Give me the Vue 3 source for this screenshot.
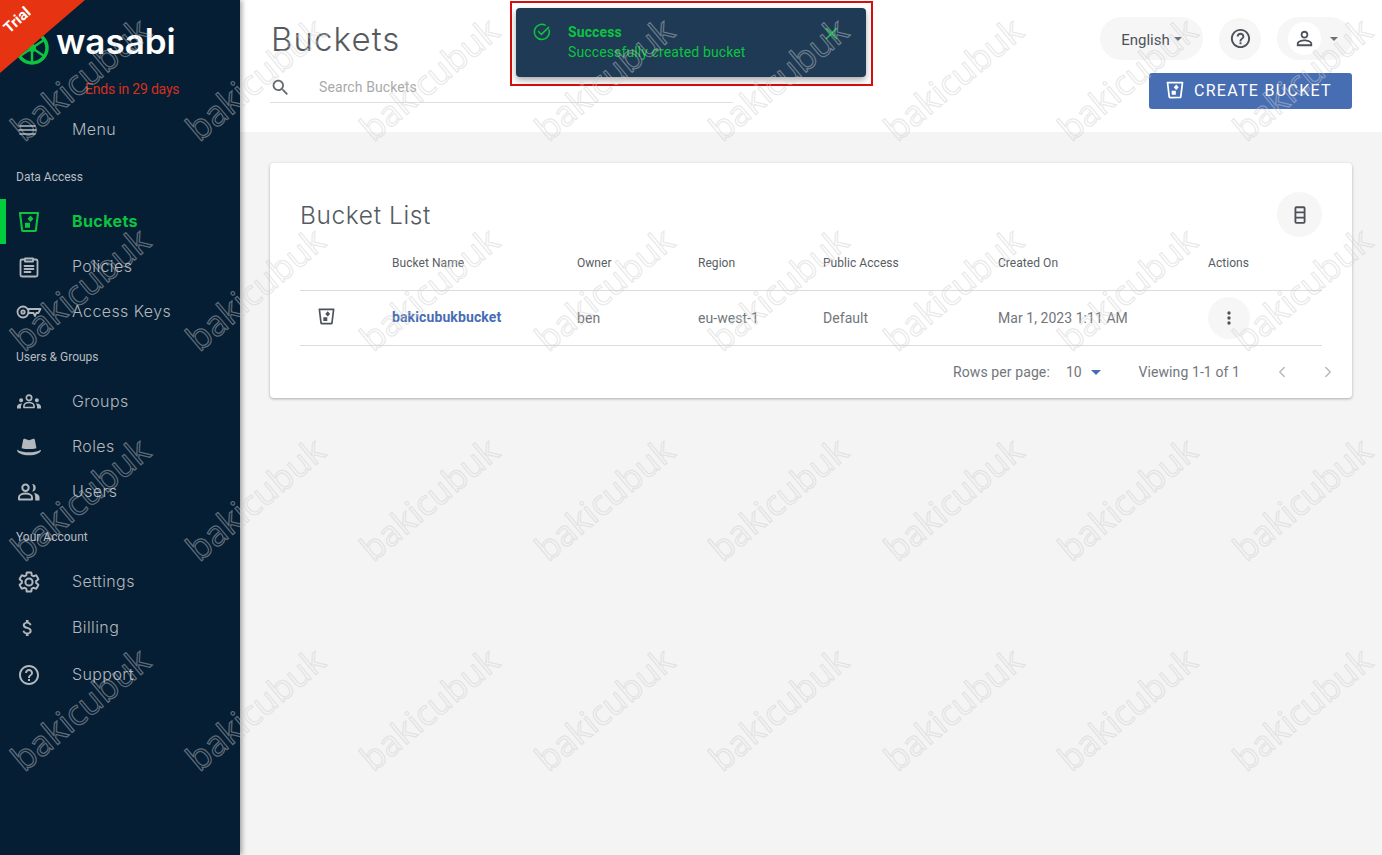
<script setup>
import { h } from 'vue'

const icons = {
  menu: { view: '0 0 24 24', s: ['M3 8h15M2 12h17M3 16h15'], w: 1.6 },
  bucket: {
    view: '0 0 24 24',
    s: ['M3 3h18l-2.100 17.200a1 1 0 0 1-1 .8H6.100a1 1 0 0 1-1-.8z'],
    f: ['M13.500 5.500l3 3.200-3 3.200-3-3.200zM8 12.800h5v5H8z'],
    w: 2.100
  },
  policy: {
    view: '0 0 24 24',
    s: ['M8 4.500H5a1.500 1.500 0 0 0-1.500 1.500v14A1.500 1.500 0 0 0 5 21.500h14a1.500 1.500 0 0 0 1.500-1.500V6A1.500 1.500 0 0 0 19 4.500h-3M8 3.500h8v3H8zM7.500 11h9M7.500 14h9M7.500 17h6'],
    w: 1.800
  },
  key: {
    view: '0 0 26 16',
    s: ['M12 5h12.500l-2.200 4h-2l-1.300 3-1.500-3H12M7 2.500a5.500 5.500 0 1 0 0 11 5.500 5.500 0 0 0 0-11zM7 6.300a1.700 1.700 0 1 0 0 3.400 1.700 1.700 0 0 0 0-3.400z'],
    w: 1.800
  },
  groups: {
    view: '0 0 26 18',
    s: ['M13 1.500a2.900 2.900 0 1 0 0 5.800 2.900 2.900 0 0 0 0-5.800zM7.500 15v-1.500c0-2.600 2.700-4 5.500-4s5.500 1.400 5.500 4V15z'],
    f: ['M4.500 5a2.200 2.200 0 1 1 0 4.400 2.200 2.200 0 0 1 0-4.400zM21.500 5a2.200 2.200 0 1 1 0 4.400 2.200 2.200 0 0 1 0-4.400zM0 16v-2c0-2 2-3.500 5.500-3.400-.8.900-1.200 2-1.200 3.400v2zM26 16v-2c0-2-2-3.500-5.500-3.400.8.900 1.200 2 1.200 3.400v2z'],
    w: 1.800
  },
  hat: {
    view: '1.500 1.500 21 21',
    f: ['M5.500 13 6.800 6c.2-1 1.200-1.400 2-1l3.200 1.200L15.200 5c.8-.4 1.800 0 2 1l1.300 7c-4 1-9 1-13 0zM1.500 14.500c3 1.700 7 2.200 10.500 2.200s7.500-.5 10.500-2.200c0 3.200-5 4.800-10.500 4.800s-10.500-1.600-10.500-4.800z']
  },
  users: {
    view: '0 0 24 24',
    s: ['M8.500 4.500a3.200 3.200 0 1 0 0 6.400 3.200 3.200 0 0 0 0-6.400zM2 19.500v-2.200c0-2.400 3.200-3.700 6.500-3.700s6.500 1.300 6.500 3.700v2.200z'],
    f: ['M15 4a3.700 3.700 0 0 1 0 7.400c.9-1 1.300-2.300 1.300-3.700S15.900 5 15 4zM17 13c3 .5 5.500 1.800 5.500 4.300v3.200h-4.300v-3.200c0-1.700-.5-3.100-1.200-4.300z'],
    w: 2
  },
  settings: {
    view: '0 0 24 24',
    s: ['M19.140 12.940c.04-.3.06-.61.06-.94 0-.32-.02-.64-.07-.94l2.030-1.580c.18-.14.23-.41.12-.61l-1.920-3.320c-.12-.22-.37-.29-.59-.22l-2.390.96c-.5-.38-1.030-.7-1.620-.94l-.36-2.540c-.04-.24-.24-.41-.48-.41h-3.840c-.24 0-.43.17-.47.41l-.36 2.540c-.59.24-1.130.57-1.620.94l-2.390-.96c-.22-.08-.47 0-.59.22L2.740 8.870c-.12.21-.08.47.12.61l2.030 1.580c-.05.3-.09.63-.09.94s.02.64.07.94l-2.030 1.580c-.18.14-.23.41-.12.61l1.920 3.320c.12.22.37.29.59.22l2.390-.96c.5.38 1.030.7 1.620.94l.36 2.540c.05.24.24.41.48.41h3.840c.24 0 .44-.17.47-.41l.36-2.540c.59-.24 1.130-.56 1.620-.94l2.390.96c.22.08.47 0 .59-.22l1.920-3.320c.12-.22.07-.47-.12-.61l-2.010-1.580zM12 15.600c-1.980 0-3.600-1.620-3.600-3.600s1.620-3.600 3.600-3.600 3.600 1.620 3.600 3.600-1.620 3.600-3.600 3.600z'],
    w: 2
  },
  dollar: {
    view: '0 -1.500 27 27',
    f: ['M11.800 10.900c-2.270-.59-3-1.200-3-2.150 0-1.090 1.010-1.850 2.700-1.850 1.780 0 2.440.85 2.500 2.100h2.210c-.07-1.720-1.120-3.300-3.210-3.810V3h-3v2.160c-1.940.42-3.500 1.680-3.500 3.610 0 2.310 1.910 3.460 4.700 4.130 2.500.6 3 1.480 3 2.410 0 .69-.49 1.790-2.700 1.790-2.060 0-2.870-.92-2.980-2.100h-2.200c.12 2.190 1.760 3.420 3.680 3.830V21h3v-2.150c1.950-.37 3.500-1.500 3.500-3.550 0-2.840-2.430-3.810-4.700-4.400z']
  },
  help: {
    view: '0 0 24 24',
    f: ['M11 18h2v-2h-2v2zm1-16C6.480 2 2 6.480 2 12s4.480 10 10 10 10-4.480 10-10S17.520 2 12 2zm0 18c-4.410 0-8-3.590-8-8s3.590-8 8-8 8 3.590 8 8-3.590 8-8 8zm0-14c-2.210 0-4 1.790-4 4h2c0-1.100.9-2 2-2s2 .9 2 2c0 2-3 1.750-3 5h2c0-2.250 3-2.500 3-5 0-2.210-1.790-4-4-4z']
  },
  person: {
    view: '0 0 24 24',
    f: ['M12 5.900c1.160 0 2.100.94 2.100 2.100s-.94 2.100-2.100 2.100S9.900 9.160 9.900 8s.94-2.100 2.100-2.100m0 9c2.970 0 6.100 1.460 6.100 2.100v1.100H5.900V17c0-.64 3.130-2.100 6.100-2.100M12 4C9.790 4 8 5.790 8 8s1.790 4 4 4 4-1.790 4-4-1.790-4-4-4zm0 9c-2.670 0-8 1.340-8 4v3h16v-3c0-2.660-5.330-4-8-4z']
  },
  search: {
    view: '0 0 24 24',
    f: ['M15.500 14h-.79l-.28-.27C15.410 12.590 16 11.110 16 9.500 16 5.910 13.090 3 9.500 3S3 5.910 3 9.500 5.910 16 9.500 16c1.610 0 3.090-.59 4.230-1.570l.27.28v.79l5 4.990L20.490 19l-4.990-5zm-6 0C7.010 14 5 11.990 5 9.500S7.010 5 9.500 5 14 7.010 14 9.500 11.990 14 9.500 14z']
  },
  check: {
    view: '0 0 24 24',
    s: ['M20.500 9.500A9 9 0 1 1 15.800 3.800M7.800 11.500l3.400 3.400L20 6.500'],
    w: 1.800
  },
  close: { view: '0 0 24 24', s: ['M4 4l16 16M20 4L4 20'], w: 2.600 },
  storage: {
    view: '0 0 24 24',
    s: ['M8 3.500h8a1 1 0 0 1 1 1v15a1 1 0 0 1-1 1H8a1 1 0 0 1-1-1v-15a1 1 0 0 1 1-1zM7 9.200h10M7 14.800h10'],
    w: 2
  },
  dots: {
    view: '0 0 24 24',
    f: ['M12 8a2 2 0 1 0 0-4 2 2 0 0 0 0 4zm0 2a2 2 0 1 0 0 4 2 2 0 0 0 0-4zm0 6a2 2 0 1 0 0 4 2 2 0 0 0 0-4z']
  },
  prev: { view: '0 0 24 24', s: ['M15 6l-6 6 6 6'], w: 1.800 },
  next: { view: '0 0 24 24', s: ['M9 6l6 6-6 6'], w: 1.800 }
}

// small functional component so the icon table above stays the only source of paths
const Icon = (props) => {
  const ic = icons[props.name]
  const strokes = (ic.s || []).map((d) =>
    h('path', { d, fill: 'none', stroke: 'currentColor', 'stroke-width': ic.w, 'stroke-linejoin': 'round', 'stroke-linecap': 'round' })
  )
  const fills = (ic.f || []).map((d) => h('path', { d, fill: 'currentColor' }))
  return h('svg', { viewBox: ic.view, width: props.size, height: props.size }, [...strokes, ...fills])
}
Icon.props = ['name', 'size']

const nav = [
  { label: 'Menu', icon: 'menu', toggle: true },
  { section: 'Data Access' },
  { label: 'Buckets', icon: 'bucket', active: true },
  { label: 'Policies', icon: 'policy' },
  { label: 'Access Keys', icon: 'key' },
  { section: 'Users & Groups' },
  { label: 'Groups', icon: 'groups' },
  { label: 'Roles', icon: 'hat' },
  { label: 'Users', icon: 'users' },
  { section: 'Your Account' },
  { label: 'Settings', icon: 'settings' },
  { label: 'Billing', icon: 'dollar', tall: true },
  { label: 'Support', icon: 'help', tall: true }
]

const watermarks = Array.from({ length: 32 }, (_, i) => i)
</script>

<template>
  <div class="page">
    <aside class="sidebar">
      <div class="ribbon"><span>Trial</span></div>
      <div class="logo">
        <svg class="logo-mark" viewBox="0 0 34 34" width="34" height="34">
          <circle cx="17" cy="17" r="15" fill="none" stroke="#0cc440" stroke-width="3.500" />
          <path d="M17 3v28M5 9l24 16M29 9L5 25" stroke="#0cc440" stroke-width="2.500" fill="none" />
          <circle cx="17" cy="17" r="4" fill="#0cc440" />
        </svg>
        <span class="logo-text">wasabi</span>
      </div>
      <div class="ends">Ends in 29 days</div>
      <nav class="nav">
        <template v-for="item in nav" :key="item.label || item.section">
          <div v-if="item.section" class="nav-section">{{ item.section }}</div>
          <div v-else class="nav-item" :class="{ active: item.active, tall: item.tall, toggle: item.toggle }">
            <span class="nav-icon"><Icon :name="item.icon" :size="item.icon === 'key' ? 26 : 24" /></span>
            <span class="nav-label">{{ item.label }}</span>
          </div>
        </template>
      </nav>
    </aside>

    <main class="main">
      <header class="header">
        <div class="header-left">
          <h1 class="title">Buckets</h1>
          <div class="search">
            <span class="search-icon"><Icon name="search" :size="21" /></span>
            <span class="search-text">Search Buckets</span>
          </div>
        </div>
        <div class="header-right">
          <div class="controls">
            <div class="pill lang"><span class="lang-text">English</span> <i class="caret"></i></div>
            <div class="round"><Icon name="help" :size="23" /></div>
            <div class="pill user">
              <span class="user-circle"><Icon name="person" :size="23" /></span>
              <i class="caret"></i>
            </div>
          </div>
          <button class="create-btn">
            <Icon name="bucket" :size="20" />
            <span>CREATE BUCKET</span>
          </button>
        </div>
      </header>

      <section class="content">
        <div class="card">
          <div class="card-head">
            <h2 class="card-title">Bucket List</h2>
            <div class="round storage"><Icon name="storage" :size="22" /></div>
          </div>
          <div class="row head-row">
            <span></span>
            <span>Bucket Name</span>
            <span>Owner</span>
            <span>Region</span>
            <span>Public Access</span>
            <span>Created On</span>
            <span>Actions</span>
          </div>
          <div class="row body-row">
            <span class="row-icon"><Icon name="bucket" :size="19" /></span>
            <a class="bucket-link">bakicubukbucket</a>
            <span>ben</span>
            <span>eu-west-1</span>
            <span>Default</span>
            <span>Mar 1, 2023 1:11 AM</span>
            <span class="action"><Icon name="dots" :size="20" /></span>
          </div>
          <div class="pager">
            <span>Rows per page:</span>
            <span class="per-page">10 <i class="caret blue"></i></span>
            <span class="viewing">Viewing 1-1 of 1</span>
            <span class="arrow"><Icon name="prev" :size="18" /></span>
            <span class="arrow"><Icon name="next" :size="18" /></span>
          </div>
        </div>
      </section>
    </main>

    <div class="toast-mark">
      <div class="toast">
        <span class="toast-icon"><Icon name="check" :size="20" /></span>
        <div class="toast-body">
          <strong>Success</strong>
          <span>Successfully created bucket</span>
        </div>
        <span class="toast-close"><Icon name="close" :size="15" /></span>
      </div>
    </div>

    <div class="watermarks">
      <span v-for="n in watermarks" :key="n" class="wm"><b>bakicubuk</b></span>
    </div>
  </div>
</template>

<style>
html,
body {
  margin: 0;
  background: #f4f4f4;
}
</style>

<style scoped>
* {
  box-sizing: border-box;
}

.page {
  position: relative;
  display: flex;
  width: 100%;
  height: 855px;
  overflow: hidden;
  font-family: Roboto, "Liberation Sans", sans-serif;
  color: #555b61;
}

.sidebar {
  position: relative;
  z-index: 2;
  flex: 0 0 240px;
  background: #051e34;
  box-shadow: 2px 0 5px rgba(0, 0, 0, 0.35);
}

.ribbon {
  position: absolute;
  top: 0;
  left: 0;
  z-index: 2;
  width: 85px;
  height: 73px;
  background: #e63312;
  clip-path: polygon(0 0, 100% 0, 0 100%);
}

.ribbon span {
  position: absolute;
  top: 11px;
  left: 2px;
  transform: rotate(-42deg);
  font-size: 15px;
  font-weight: 700;
  color: #fff;
}

.logo {
  display: flex;
  align-items: center;
  gap: 7px;
  height: 50px;
  padding: 32px 0 0 15px;
}

.logo-mark {
  flex: none;
  margin-top: 14px;
}

.logo-text {
  font-family: Inter, "Liberation Sans", sans-serif;
  font-size: 35px;
  font-weight: 600;
  line-height: 1;
  color: #fff;
}

.ends {
  margin-top: 30px;
  padding-left: 85px;
  height: 18px;
  font-size: 14px;
  line-height: 18px;
  letter-spacing: -0.2px;
  color: #d5301c;
}

.nav {
  margin-top: 11px;
}

.nav-item {
  position: relative;
  display: flex;
  align-items: center;
  height: 45px;
  padding-left: 16px;
  color: #b4b8bc;
}

.nav-item.toggle {
  margin-top: -2px;
  margin-bottom: 2px;
}

.nav-item.tall {
  height: 47px;
}

.nav-item.active {
  color: #0cc440;
}

.nav-item.active::before {
  content: '';
  position: absolute;
  left: 0;
  top: 0;
  bottom: 0;
  width: 6px;
  background: #00ce3e;
}

.nav-icon {
  display: flex;
  align-items: center;
  justify-content: center;
  width: 26px;
}

.nav-label {
  margin-left: 30px;
  margin-top: -2px;
  font-family: Inter, "Liberation Sans", sans-serif;
  font-size: 16px;
  font-weight: 300;
  letter-spacing: 0.4px;
}

.nav-item.active .nav-label {
  font-weight: 700;
}

.nav-section {
  display: flex;
  align-items: center;
  height: 45px;
  padding-left: 16px;
  font-size: 12px;
  color: #b9bcc0;
}

.main {
  flex: 1;
  min-width: 0;
  display: flex;
  flex-direction: column;
}

.header {
  display: flex;
  justify-content: space-between;
  height: 132px;
  padding: 0 30px;
  background: #fff;
}

.header-left {
  width: 463px;
}

.title {
  margin: 19px 0 0 1px;
  font-family: Inter, "Liberation Sans", sans-serif;
  font-size: 33px;
  font-weight: 300;
  line-height: 40px;
  letter-spacing: 1.1px;
  color: #555b61;
}

.search {
  display: flex;
  align-items: center;
  height: 44px;
  padding-top: 13px;
  border-bottom: 1px solid #dfdfdf;
}

.search-icon {
  display: flex;
  width: 49px;
  color: #64696e;
}

.search-text {
  font-size: 14px;
  letter-spacing: 0.1px;
  color: #a9a9a9;
}

.header-right {
  display: flex;
  flex-direction: column;
  align-items: flex-end;
  padding-top: 17px;
}

.controls {
  display: flex;
  align-items: center;
  gap: 16px;
}

.pill,
.round {
  display: flex;
  align-items: center;
  justify-content: center;
  background: #f6f6f6;
  color: #4c5258;
}

.pill {
  height: 43px;
  border-radius: 22px;
}

.lang {
  width: 103px;
  gap: 4px;
  font-size: 15px;
}

.lang-text {
  margin-top: 2px;
}

.round {
  width: 42px;
  height: 42px;
  border-radius: 50%;
}

.user {
  width: 75px;
  justify-content: flex-start;
  padding-left: 11px;
  gap: 9px;
}

.user-circle {
  display: flex;
  align-items: center;
  justify-content: center;
  width: 33px;
  height: 33px;
  border-radius: 50%;
  background: #fff;
}

.caret {
  display: inline-block;
  width: 0;
  height: 0;
  border-left: 4px solid transparent;
  border-right: 4px solid transparent;
  border-top: 4px solid #6d7278;
}

.caret.blue {
  border-left-width: 5px;
  border-right-width: 5px;
  border-top: 5px solid #476db3;
  margin: 0 0 2px 6px;
}

.create-btn {
  display: flex;
  align-items: center;
  gap: 9px;
  width: 203px;
  height: 36px;
  margin-top: 13px;
  padding: 0 0 2px 16px;
  border: none;
  border-radius: 3px;
  background: #476db3;
  color: #fff;
  font-family: Roboto, "Liberation Sans", sans-serif;
  font-size: 16px;
  font-weight: 400;
  letter-spacing: 1.3px;
}

.content {
  flex: 1;
  padding: 31px 30px 0;
  background: #f4f4f4;
}

.card {
  height: 235px;
  padding: 29px 30px 0;
  border-radius: 4px;
  background: #fff;
  box-shadow: 0 1px 3px rgba(0, 0, 0, 0.3);
}

.card-head {
  display: flex;
  align-items: flex-start;
  justify-content: space-between;
  height: 50px;
}

.card-title {
  margin: 8px 0 0;
  font-family: Inter, "Liberation Sans", sans-serif;
  font-size: 24.5px;
  font-weight: 300;
  line-height: 30px;
  letter-spacing: 0.6px;
  color: #555b61;
}

.storage {
  width: 45px;
  height: 45px;
}

.row {
  display: grid;
  grid-template-columns: 92px 185px 121px 125px 175px 210px 1fr;
  align-items: center;
}

.head-row {
  height: 49px;
  padding-bottom: 6px;
  font-size: 12px;
  letter-spacing: 0.05px;
  color: #575d63;
  border-bottom: 1px solid #dcdcdc;
}

.body-row {
  height: 55px;
  font-size: 14px;
  letter-spacing: 0.05px;
  color: #72767b;
  border-bottom: 1px solid #dcdcdc;
}

.row-icon {
  display: flex;
  padding-left: 17px;
  margin-top: -3px;
  color: #4c5258;
}

.bucket-link {
  margin-top: -2px;
  font-weight: 700;
  letter-spacing: 0.12px;
  color: #476db3;
}

.action {
  display: flex;
  align-items: center;
  justify-content: center;
  width: 42px;
  height: 42px;
  border-radius: 50%;
  background: #f6f6f6;
  color: #4c5258;
}

.pager {
  display: flex;
  align-items: center;
  justify-content: flex-end;
  height: 52px;
  margin-right: -29px;
  font-size: 14px;
  letter-spacing: 0.1px;
  color: #72767b;
}

.per-page {
  margin-left: 16px;
}

.viewing {
  margin-left: 37px;
  margin-right: 19px;
}

.arrow {
  display: flex;
  width: 46px;
  justify-content: center;
  color: #b3b6b9;
}

.toast-mark {
  position: absolute;
  top: 1px;
  left: 510px;
  z-index: 3;
  width: 363px;
  height: 85px;
  padding: 5px 0 0 4px;
  border: 2px solid #d60e0e;
}

.toast {
  display: flex;
  width: 350px;
  height: 69px;
  padding: 15px 0 0 16px;
  border-radius: 4px;
  background: #1e3a54;
  box-shadow: 0 3px 6px rgba(0, 0, 0, 0.35);
  color: #0cc440;
  font-size: 14px;
}

.toast-icon {
  display: flex;
  align-items: flex-start;
  margin-top: -1px;
}

.toast-body {
  display: flex;
  flex-direction: column;
  gap: 2px;
  width: 256px;
  margin-left: 16px;
  line-height: 18px;
  letter-spacing: 0.12px;
}

.toast-close {
  display: flex;
  margin-top: 3px;
  color: #15c64a;
}

.watermarks {
  position: absolute;
  top: -27px;
  left: -7px;
  z-index: 5;
  display: grid;
  grid-template-columns: repeat(8, 174.5px);
  grid-auto-rows: 210px;
  pointer-events: none;
}

.wm {
  display: flex;
  align-items: center;
  justify-content: center;
}

.wm b {
  display: block;
  transform: rotate(-40deg);
  font-family: "Open Sans", sans-serif;
  font-size: 35px;
  font-weight: 400;
  color: transparent;
  -webkit-text-stroke: 1.2px rgba(205, 205, 205, 0.45);
  white-space: nowrap;
}
</style>
